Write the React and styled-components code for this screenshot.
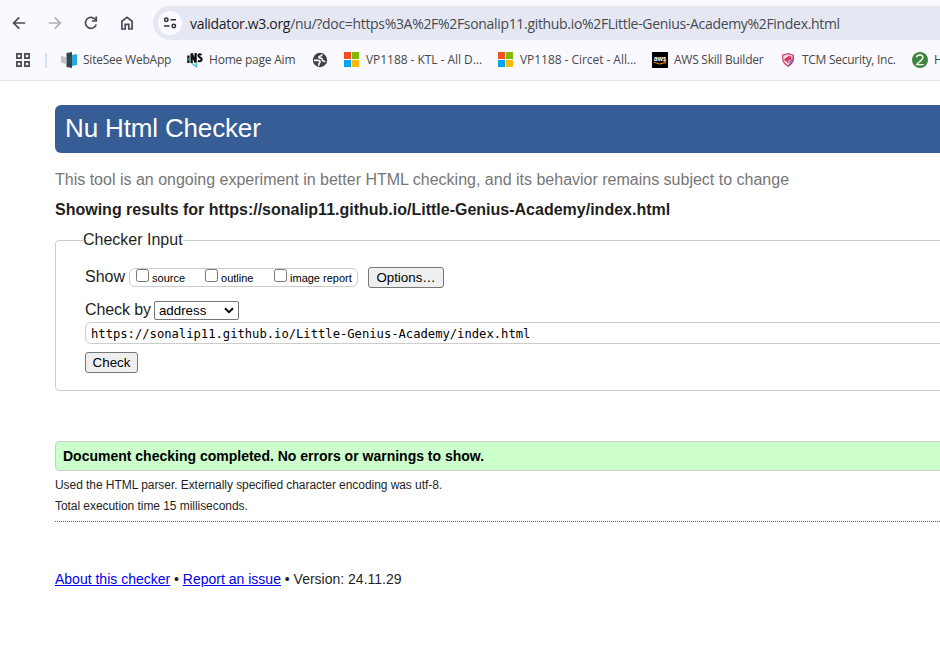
import React from "react";
import styled, { createGlobalStyle } from "styled-components";

const Global = createGlobalStyle`
  * { box-sizing: border-box; }
  body { margin: 0; background: #fff; overflow: hidden; font-family: "Liberation Sans", Arial, sans-serif; }
`;
const Window = styled.div`
  width: 940px;
  height: 660px;
  overflow: hidden;
  white-space: nowrap;
  color: #1f1f1f;
`;
const Chrome = styled.header`
  height: 81px;
  background: #faf9ff;
  border-bottom: 1px solid #dfe1ee;
  font-family: "Open Sans", "Noto Sans", sans-serif;
  overflow: hidden;
`;
const Toolbar = styled.div`
  display: flex;
  align-items: center;
  height: 34px;
  margin-top: 6px;
  padding-left: 11px;
`;
const NavIcon = styled.svg`
  flex: none;
  width: 16px;
  height: 16px;
  margin-right: 20px;
  fill: none;
  stroke: ${(p) => p.$color || "#474a57"};
  stroke-width: 1.7;
`;
const AddressBar = styled.div`
  display: flex;
  align-items: center;
  flex: 1;
  height: 34px;
  margin-left: -2px;
  padding-left: 5px;
  border-radius: 17px 0 0 17px;
  background: #e5e8f3;
`;
const SiteInfo = styled.span`
  display: grid;
  place-items: center;
  width: 24px;
  height: 24px;
  border-radius: 50%;
  background: #faf9ff;
`;
const Url = styled.span`
  margin-left: 8px;
  font-size: 14px;
  letter-spacing: ${(p) => p.$track}px;
  color: #474a50;
  b { font-weight: 400; color: #1f2024; }
`;
const Bookmarks = styled.nav`
  display: flex;
  align-items: center;
  height: 40px;
  padding-left: 15px;
`;
const AppsIcon = styled.svg`
  flex: none;
  width: 16px;
  height: 16px;
  fill: none;
  stroke: #474a50;
  stroke-width: 1.7;
`;
const Separator = styled.i`
  flex: none;
  width: 2px;
  height: 15px;
  margin: 0 14px;
  background: #d3e3fd;
`;
const Bookmark = styled.a`
  display: flex;
  align-items: center;
  flex: none;
  gap: 6px;
  width: ${(p) => p.$width}px;
  font-size: 12px;
  letter-spacing: ${(p) => p.$track || 0}px;
  color: #474747;
  svg { flex: none; }
  span { margin-top: -1px; }
`;
const Page = styled.main`
  width: 1100px;
  padding: 24px 0 0 55px;
`;
const Title = styled.h1`
  height: 48px;
  margin: 0;
  padding-left: 10px;
  border-radius: 6px;
  background: #365d95;
  color: #fff;
  font-size: 26px;
  letter-spacing: -0.15px;
  font-weight: 400;
  line-height: 46px;
`;
const Tagline = styled.p`
  margin: 17px 0 0;
  font-size: 16px;
  line-height: 20px;
  color: #767676;
`;
const ResultsFor = styled.h2`
  margin: 10px 0 0;
  font-size: 16px;
  line-height: 20px;
`;
const InputSet = styled.fieldset`
  height: 161px;
  margin: 10px 0 0;
  padding: 17px 0 0 29px;
  border: 1px solid #ccc;
  border-radius: 4px;
  legend { margin-left: -2px; padding: 0; font-size: 16px; line-height: 20px; }
`;
const Row = styled.div`
  display: flex;
  align-items: center;
  height: 21px;
  margin-top: ${(p) => p.$gap || 0}px;
  font-size: 16px;
`;
const RowLabel = styled.span`
  margin-top: -2px;
  letter-spacing: ${(p) => p.$track || 0}px;
`;
const Options = styled.span`
  display: flex;
  align-items: center;
  width: 229px;
  height: 19px;
  margin: 0 10px 0 4px;
  padding-left: 6px;
  border: 1px solid #ccc;
  border-radius: 6px;
`;
const Option = styled.label`
  display: flex;
  align-items: center;
  width: 69px;
  font-size: 11px;
  line-height: 13px;
  color: #000;
  input { flex: none; width: 13px; height: 13px; margin: -4px 3px 0 0; }
  span { padding-top: 2px; }
`;
const Button = styled.button`
  width: ${(p) => p.$width}px;
  height: 21px;
  padding: 0;
  border: 1px solid #767676;
  border-radius: 3px;
  background: #efefef;
  color: #000;
  font: 13.333px/18px "Liberation Sans", Arial, sans-serif;
`;
const Method = styled.span`
  display: flex;
  align-items: center;
  justify-content: space-between;
  width: 85px;
  height: 19px;
  margin-left: 3px;
  padding: 0 4px 0 4px;
  border: 1px solid #767676;
  border-radius: 2px;
  color: #000;
  font-size: 13.333px;
`;
const AddressField = styled.div`
  height: 22px;
  margin: 1px 0 8px;
  padding-left: 5px;
  border: 1px solid #ccc;
  border-radius: 6px;
  color: #000;
  font: 12.2px/22px "DejaVu Sans Mono", monospace;
  letter-spacing: -0.015px;
`;
const Success = styled.p`
  height: 30px;
  margin: 50px 0 0;
  padding-left: 7px;
  border: 1px solid #ccc;
  border-radius: 4px;
  background: #cfc;
  color: #000;
  font-size: 14px;
  font-weight: 700;
  line-height: 29px;
`;
const Details = styled.div`
  height: 51px;
  padding-top: 4px;
  border-bottom: 1px dotted #666;
  font-size: 12px;
  letter-spacing: -0.055px;
  line-height: 21px;
`;
const Footer = styled.footer`
  margin-top: 47px;
  font-size: 14px;
  line-height: 20px;
  a { color: #0000ee; text-decoration: underline; }
`;

const Microsoft = () => (
  <svg width="16" height="16" viewBox="0 0 16 16">
    <path fill="#f25022" d="M0 0h7v7H0z" />
    <path fill="#7fba00" d="M8 0h7v7H8z" />
    <path fill="#00a4ef" d="M0 8h7v7H0z" />
    <path fill="#ffb900" d="M8 8h7v7H8z" />
  </svg>
);
const SiteSee = () => (
  <svg width="16" height="16" viewBox="0 0 16 16">
    <path fill="#c2c4c7" d="M0 4l5 1v7l-5-1.5z" />
    <path fill="#29abe2" d="M11 3l5-1v11l-5 1z" />
    <path fill="#37474f" d="M5.5 1L11 0v16l-5.5-1z" />
  </svg>
);
const HomeAim = () => (
  <svg width="16" height="16" viewBox="0 0 16 16">
    <path d="M1.4 3.4V11M4.6 11V1.5l4 9V1" fill="none" stroke="#111" strokeWidth="2.3" />
    <path d="M14.6 2.9c-2.8-1.8-4.4.9-2 2.4 3.4 1.5 2.2 5-1.8 3.6" fill="none" stroke="#111" strokeWidth="2.1" />
    <path d="M1 6.5l2.4 2.8M4.5 11l4.8 3.8V10.6" fill="none" stroke="#39bdb7" strokeWidth="1.2" />
  </svg>
);
const Globe = () => (
  <svg width="16" height="16" viewBox="0 0 16 16">
    <circle cx="8" cy="8" r="7.2" fill="#3f4246" />
    <path d="M2 8.4h4.2c1.4 0 1.9.8 1.9 1.8 0 .8-1.2.7-1.2 1.6v1.9M9.7 2.2v1c0 1.1-2.9.5-2.9 2 0 1.4 2.4.5 3.1 1.4.5.7-.2 1.7.8 2.1.8.2 1.4.2 2.2 1.3" fill="none" stroke="#faf9ff" strokeWidth="1.6" />
  </svg>
);
const Aws = () => (
  <svg width="16" height="16" viewBox="0 0 16 16">
    <path fill="#000" d="M0 0h16v16H0z" />
    <text x="1.7" y="8.6" fill="#fff" fontFamily="Open Sans" fontWeight="700" fontSize="6.5" letterSpacing="0" textLength="12.5">aws</text>
    <path d="M2 10.2q5.5 3.3 10.7.6M11.4 9.8l2.4-.1-.8 2" fill="none" stroke="#f79400" />
  </svg>
);
const Shield = () => (
  <svg width="16" height="16" viewBox="0 0 16 16">
    <path d="M2.6 3.2L8 1.7l5.4 1.5-.4 5.6q-1.4 3.6-5 5.4-3.6-1.8-5-5.4z" fill="#f7dcea" stroke="#d3405f" strokeWidth="1.2" />
    <path d="M13.4 3.6L13 8.8q-1.4 3.6-5 5.4" fill="none" stroke="#8b439c" strokeWidth="1.2" />
    <path d="M3.5 7.8L9.2 3.5l2.6 1.6-1.2 3-2.3.4v3.6L6.5 9.4z" fill="#cf3d68" />
    <path d="M12.2 6.4l-.7 3L9.2 12l.2-2.4z" fill="#97479a" />
  </svg>
);
const Two = () => (
  <svg width="16" height="16" viewBox="0 0 16 16">
    <circle cx="8" cy="8" r="8" fill="#3d853d" />
    <path d="M4.5 5.4c.5-3.4 7-3 6.4.5C10.6 8 6 10.5 4.7 12.6h7" fill="none" stroke="#fff" strokeWidth="1.4" />
  </svg>
);
const bookmarks = [
  { icon: SiteSee, text: "SiteSee WebApp", width: 126, track: -0.22 },
  { icon: HomeAim, text: "Home page Aim", width: 125, track: -0.22 },
  { icon: Globe, text: "", width: 32 },
  { icon: Microsoft, text: "VP1188 - KTL - All D...", width: 154, track: -0.05 },
  { icon: Microsoft, text: "VP1188 - Circet - All...", width: 154, track: -0.05 },
  { icon: Aws, text: "AWS Skill Builder", width: 128, track: -0.25 },
  { icon: Shield, text: "TCM Security, Inc.", width: 132, track: -0.28 },
  { icon: Two, text: "H", width: 90 },
];

export default function App() {
  return (
    <Window>
      <Global />
      <Chrome>
        <Toolbar>
          <NavIcon viewBox="0 0 16 16"><path d="M14.2 8H3M8.3 2.3L2.6 8l5.7 5.7" /></NavIcon>
          <NavIcon viewBox="0 0 16 16" $color="#afb0b8"><path d="M1.8 8H13M7.7 2.3L13.4 8l-5.7 5.7" /></NavIcon>
          <NavIcon viewBox="0 0 16 16"><path d="M12.6 4.9A5.5 5.5 0 1 0 13.2 9.5M13.3 1.5V6H8.8" /></NavIcon>
          <NavIcon viewBox="0 0 16 16"><path d="M2.9 14V6.2L8 2.3l5.1 3.9V14H9.8V9.3H6.2V14z" /></NavIcon>
          <AddressBar>
            <SiteInfo>
              <svg width="14" height="14" viewBox="0 0 14 14" fill="none" stroke="#303238" strokeWidth="1.5">
                <circle cx="3.3" cy="3.8" r="1.7" /><path d="M7.5 3.8H13M1 10h5.5" /><circle cx="10.8" cy="10" r="1.7" />
              </svg>
            </SiteInfo>
            <Url $track={-0.32}><b>validator.w3.org</b>/nu/?doc=https%3A%2F%2Fsonalip11.github.io%2FLittle-Genius-Academy%2Findex.html</Url>
          </AddressBar>
        </Toolbar>
        <Bookmarks>
          <AppsIcon viewBox="0 0 16 16">
            <path d="M1.9 1.9h4.2v4.2H1.9zM9.9 1.9h4.2v4.2H9.9zM1.9 9.9h4.2v4.2H1.9zM9.9 9.9h4.2v4.2H9.9z" />
          </AppsIcon>
          <Separator />
          {bookmarks.map(({ icon: Icon, text, width, track }, i) => (
            <Bookmark key={i} $width={width} $track={track}><Icon />{text && <span>{text}</span>}</Bookmark>
          ))}
        </Bookmarks>
      </Chrome>
      <Page>
        <Title>Nu Html Checker</Title>
        <Tagline>This tool is an ongoing experiment in better HTML checking, and its behavior remains subject to change</Tagline>
        <ResultsFor>Showing results for https://sonalip11.github.io/Little-Genius-Academy/index.html</ResultsFor>
        <InputSet>
          <legend>Checker Input</legend>
          <Row>
            <RowLabel>Show</RowLabel>
            <Options>
              <Option><input type="checkbox" /><span>source</span></Option>
              <Option><input type="checkbox" /><span>outline</span></Option>
              <Option><input type="checkbox" /><span>image report</span></Option>
            </Options>
            <Button $width={76}>Options…</Button>
          </Row>
          <Row $gap={12}>
            <RowLabel $track={-0.1}>Check by</RowLabel>
            <Method>
              address
              <svg width="10" height="7" viewBox="0 0 10 7" fill="none" stroke="#000" strokeWidth="2"><path d="M1 1.2l4 4 4-4" /></svg>
            </Method>
          </Row>
          <AddressField>https://sonalip11.github.io/Little-Genius-Academy/index.html</AddressField>
          <Button $width={53}>Check</Button>
        </InputSet>
        <Success>Document checking completed. No errors or warnings to show.</Success>
        <Details>
          <div>Used the HTML parser. Externally specified character encoding was utf-8.</div>
          <div>Total execution time 15 milliseconds.</div>
        </Details>
        <Footer><a>About this checker</a> • <a>Report an issue</a> • Version: 24.11.29</Footer>
      </Page>
    </Window>
  );
}
